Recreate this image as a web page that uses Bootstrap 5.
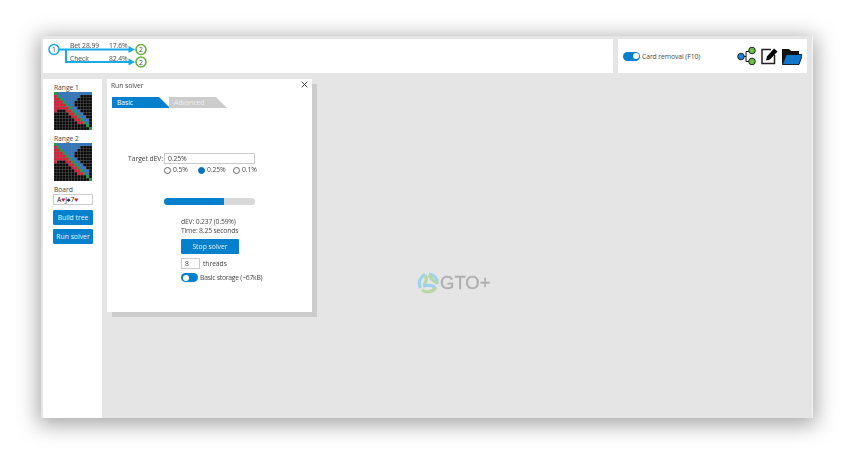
<!DOCTYPE html>
<html lang="en">
<head>
<meta charset="utf-8">
<title>GTO+</title>
<link href="https://cdn.jsdelivr.net/npm/bootstrap@5.3.0/dist/css/bootstrap.min.css" rel="stylesheet">
<style>
html,body{height:453px;overflow:hidden;background:#fff}
body{font-family:"Open Sans","Noto Sans",sans-serif;font-size:6.8px;letter-spacing:-.08px;color:#4a4a4a;line-height:9px}
.app-win{width:772px;height:382px;margin:36px 0 0 41px;background:#e5e5e5;padding:3px 6px 0 2px;box-shadow:0 4px 20px 3px rgba(0,0,0,.35);border-right:1px solid #f4f4f4;filter:blur(.3px)}
.top-a{width:570px;height:34px;background:#fff;position:relative;flex:none}
.top-b{width:189px;height:34px;background:#fff;margin-left:5px;padding:0 5px;flex:none}
.body-row{height:339px;margin-top:6px}
.side{width:59px;background:#fff;padding:5px 0 0 11px;flex:none}
.side-lbl{height:8px;line-height:8px}
.matrix{width:38px;height:38px;margin:0 0 5px;display:block}
.board-box{width:40px;height:11px;margin-left:-1px;border:1px solid #ccc;line-height:9px;padding-left:3px;color:#222;letter-spacing:-.1px;white-space:nowrap}
.board-box b{color:#d8182d;font-weight:400}
.act-btn{--bs-btn-bg:#0480cc;--bs-btn-border-color:#0480cc;--bs-btn-color:#e8f4fb;--bs-btn-padding-x:0;--bs-btn-padding-y:0;--bs-btn-font-size:6.8px;--bs-btn-border-radius:1px;--bs-btn-line-height:13px;width:40px;display:block;white-space:nowrap}
.side .act-btn{height:15px;margin:5px 0 0 -1px}
.side .act-btn+.act-btn{margin-top:4px}
.main-area{position:relative;flex:1}
.dlg{width:205px;height:233px;background:#fff;margin-left:5px;box-shadow:5px 5px 0 #ccc;padding:2px 5px 0;position:relative}
.dlg-x{position:absolute;right:4px;top:2px;width:7px;height:7px}
.tab-row{margin-top:7px;height:11px}
.tab-a,.tab-b{width:58px;height:11px;line-height:11px;padding-left:5px;color:#fff;clip-path:polygon(0 0,47px 0,100% 100%,0 100%)}
.tab-a{background:#0480cc}
.tab-b{background:#ccc;margin-left:-1px;padding-left:5px;color:#eee}
.tev-row{margin-top:45px;height:11px;line-height:11px}
.tev-lbl{width:52px;text-align:right;padding-right:1px}
.fake-input{border:1px solid #ccc;background:#fff;height:11px;line-height:9px;padding-left:3px;color:#444}
.w91{width:91px}
.radio-row{margin:1px 0 0 52px;height:10px;line-height:10px}
.rad-opt{display:flex;align-items:center;gap:2px}
.rad-a{width:34px}
.rad-b{width:35px}
.rad{display:block;width:7px;height:7px;border-radius:50%;border:1px solid #666;background:#fff}
.rad.on{background:#0472b4;border-color:#0472b4}
.bar-w{width:91px;height:7px;margin:23px 0 0 52px;--bs-progress-bg:#d9d9d9;--bs-progress-bar-bg:#0480cc;--bs-progress-border-radius:4px}
.stat{margin:12px 0 0 69px;line-height:9px;letter-spacing:-.17px}
.stop-w{width:58px;height:15px;margin:4px 0 0 69px}
.thr-row{margin:4px 0 0 69px;height:11px;line-height:11px;gap:3px}
.thr-in{width:19px}
.sw-row{margin:4px 0 0 69px;height:9px;line-height:9px;gap:2px;letter-spacing:-.24px}
.mini-sw{width:17px;height:9px;border-radius:5px;background:#0480cc;position:relative;flex:none}
.mini-sw::after{content:"";position:absolute;top:1.5px;width:6px;height:6px;border-radius:50%;background:#fff}
.mini-sw.rt::after{right:1.5px}
.mini-sw.lt::after{left:1.5px}
.card-lbl{margin-left:2px}
.logo-mark{position:absolute;left:315px;top:193px;display:flex;align-items:center;gap:1px;color:#aeaeae;-webkit-text-stroke:.3px #aeaeae;font-family:"Liberation Sans",sans-serif;font-size:18.5px;letter-spacing:0;line-height:22px}
.tree-svg{position:absolute;left:0;top:0;width:570px;height:34px}
.tree-svg text{font-family:"Open Sans",sans-serif;font-size:6.8px;fill:#4a4a4a}
.ttl{line-height:9px;margin-left:-1px}
</style>
</head>
<body>
<div class="app-win">
  <div class="d-flex">
    <div class="top-a">
      <svg class="tree-svg" viewBox="43 39 570 34">
        <text x="70" y="48">Bet 28.99</text><text x="109" y="48">17.6%</text>
        <text x="70" y="61">Check</text><text x="109" y="61">82.4%</text>
        <path d="M59 49.5H130M66 49.5V62H130" fill="none" stroke="#17ace6" stroke-width="2"/>
        <path d="M128.5 46L135 49.5L128.5 53ZM128.5 58.5L135 62L128.5 65.5Z" fill="#17ace6"/>
        <circle cx="54" cy="49.5" r="5" fill="#fff" stroke="#17ace6" stroke-width="1.6"/>
        <circle cx="141" cy="49.5" r="5" fill="#fff" stroke="#63b33a" stroke-width="1.6"/>
        <circle cx="141" cy="62" r="5" fill="#fff" stroke="#63b33a" stroke-width="1.6"/>
        <text x="52.1" y="52" style="font-size:7px">1</text><text x="139.1" y="52" style="font-size:7px">2</text><text x="139.1" y="64.5" style="font-size:7px">2</text>
      </svg>
    </div>
    <div class="top-b d-flex align-items-center">
      <span class="mini-sw rt"></span><span class="card-lbl me-auto text-nowrap">Card removal (F10)</span>
      <svg width="66" height="18" viewBox="736 47 66 18">
        <path d="M741 56.5H746M746 51.5V61.5M746 51.5H751M746 61.5H751" stroke="#111" stroke-width="1" fill="none"/>
        <circle cx="741" cy="56.5" r="3.3" fill="#1c86d6" stroke="#111" stroke-width=".9"/>
        <circle cx="752" cy="50.5" r="3.3" fill="#6cc04a" stroke="#111" stroke-width=".9"/>
        <circle cx="752" cy="61.5" r="3.3" fill="#6cc04a" stroke="#111" stroke-width=".9"/>
        <path d="M774.5 55V63.5H762V49.5H771" fill="none" stroke="#222" stroke-width="1.5"/>
        <path d="M766 60.5L767 56.5L774 48.5L777.5 51.5L770 59.5Z" fill="#000"/>
        <path d="M782 64V49H789L791 51H799V55H786.5L782.5 64Z" fill="#111"/>
        <path d="M782.5 64.5L786.5 54.5H802.5L799 64.5Z" fill="#1177cc" stroke="#111" stroke-width=".9"/>
      </svg>
    </div>
  </div>
  <div class="d-flex body-row">
    <div class="side">
      <div class="side-lbl">Range 1</div>
      <svg class="matrix" viewBox="0 0 130 130"></svg>
      <div class="side-lbl">Range 2</div>
      <svg class="matrix" viewBox="0 0 130 130"></svg>
      <div class="side-lbl">Board</div>
      <div class="board-box">A<b>♥</b>J♠7<b>♥</b></div>
      <button type="button" class="btn act-btn">Build tree</button>
      <button type="button" class="btn act-btn">Run solver</button>
    </div>
    <div class="main-area">
      <div class="dlg">
        <div class="ttl">Run solver</div>
        <svg class="dlg-x" viewBox="0 0 7 7"><path d="M.7.7L6.3 6.3M6.3.7L.7 6.3" stroke="#444" stroke-width="1"/></svg>
        <div class="d-flex tab-row"><div class="tab-a">Basic</div><div class="tab-b">Advanced</div></div>
        <div class="d-flex tev-row"><div class="tev-lbl">Target dEV:</div><div class="fake-input w91">0.25%</div></div>
        <div class="d-flex radio-row">
          <span class="rad-opt rad-a"><span class="rad"></span>0.5%</span>
          <span class="rad-opt rad-b"><span class="rad on"></span>0.25%</span>
          <span class="rad-opt"><span class="rad"></span>0.1%</span>
        </div>
        <div class="progress bar-w"><div class="progress-bar" style="width:66%"></div></div>
        <div class="stat">dEV: 0.237 (0.59%)<br>Time: 8.25 seconds</div>
        <button type="button" class="btn act-btn stop-w">Stop solver</button>
        <div class="d-flex thr-row"><div class="fake-input thr-in">8</div><span>threads</span></div>
        <div class="d-flex sw-row"><span class="mini-sw lt"></span><span class="text-nowrap">Basic storage (~67kB)</span></div>
      </div>
      <div class="logo-mark">
        <svg width="22" height="22" viewBox="0 0 22 22" fill="none" stroke-width="3.2">
          <path d="M3.5 16C.5 10 3.5 4.5 8 2.5" stroke="#9ed3ee"/>
          <path d="M8 3C10 6 9 10 7 13" stroke="#b6d7a8"/>
          <path d="M12 2C17 2.5 21 7 20 12" stroke="#9ed3ee"/>
          <path d="M12 3C14 7 16 9 20 11" stroke="#b6d7a8"/>
          <path d="M5 18C9 21 15 21 19 15" stroke="#b6d7a8"/>
          <path d="M6 14C10 13 14 13 18 15" stroke="#9ed3ee"/>
        </svg>
        <span>GTO+</span>
      </div>
    </div>
  </div>
</div>
<script>
var limits=[12,8,7,6,6,7];
function cellColor(r,c){
  if(r===c) return '#1f9e3c';
  if(c>r){
    var lim=r<limits.length?limits[r]:r+2;
    if(r>=10) lim=r+1;
    if(r>=11) lim=r;
    return c<=lim?'#2a78c8':'#0a0a0a';
  }
  if(r<=5) return '#e01c38';
  if(r===6) return (c===0||c>=4)?'#e01c38':'#0a0a0a';
  if(r>=11) return '#0a0a0a';
  return c>=r-2?'#e01c38':'#0a0a0a';
}
document.querySelectorAll('.matrix').forEach(function(m){
  var s='<rect width="130" height="130" fill="#777"/>';
  for(var r=0;r<13;r++)for(var c=0;c<13;c++){
    s+='<rect x="'+(c*10+.5)+'" y="'+(r*10+.5)+'" width="9" height="9" fill="'+cellColor(r,c)+'"/>';
  }
  m.innerHTML=s;
});
</script>
<script src="https://cdn.jsdelivr.net/npm/bootstrap@5.3.0/dist/js/bootstrap.bundle.min.js"></script>
</body>
</html>
